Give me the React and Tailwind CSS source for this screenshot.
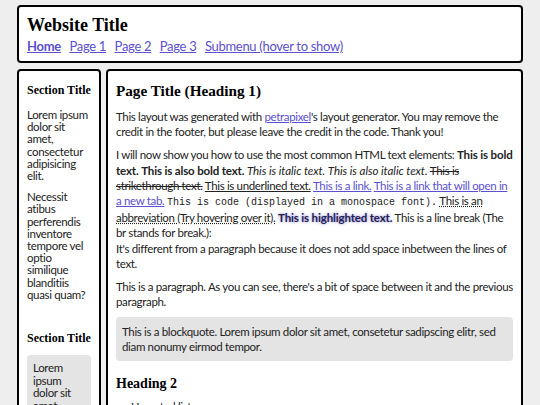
import React from "react";

const body = { fontFamily: "Lato, 'Noto Sans', sans-serif" };
const serif = { fontFamily: "'Liberation Serif', 'Times New Roman', serif" };

function A({ children, className = "" }) {
  return (
    <a href="#" className={"text-[#5b50d0] underline " + className}>
      {children}
    </a>
  );
}

export default function App() {
  return (
    <div className="min-h-screen bg-[#eeeeee] pt-[5px] pb-4 text-[#222]" style={body}>
      <div className="mx-auto w-[506px]">
        <header className="h-[58px] rounded-[4px] border-2 border-black bg-white px-[8px] pt-[7px]">
          <h1 className="text-[18px] font-bold leading-[22px] text-black" style={serif}>
            Website Title
          </h1>
          <nav className="mt-[3px] flex gap-[8.5px] text-[13px] leading-[15px] tracking-[-0.3px]">
            <A className="font-bold">Home</A>
            <A>Page 1</A>
            <A>Page 2</A>
            <A>Page 3</A>
            <A>Submenu (hover to show)</A>
          </nav>
        </header>

        <div className="mt-[6px] flex items-start gap-[5px] text-[11.5px] tracking-[-0.34px]">
          <aside className="w-[84px] shrink-0 rounded-[4px] border-2 border-black bg-white px-[8px] pt-[12px] pb-4">
            <h2 className="mb-[12px] text-[12px] font-bold leading-[14px] tracking-normal text-black" style={serif}>
              Section Title
            </h2>
            <p className="mb-[9px] leading-[12.2px]">
              Lorem ipsum dolor sit amet, consectetur adipisicing elit.
            </p>
            <p className="mb-[9px] leading-[12.2px]">
              Necessit atibus perferendis inventore tempore vel optio similique blanditiis quasi quam?
            </p>
            <h2 className="mt-[30px] text-[12px] font-bold leading-[14px] tracking-normal text-black" style={serif}>
              Section Title
            </h2>
            <div className="mt-[10px] rounded-[4px] bg-[#e4e4e4] px-[6px] py-[7px] leading-[12.5px]">
              Lorem ipsum dolor sit amet, consectetur adipisicing elit.
            </div>
          </aside>

          <main className="flex-1 rounded-[4px] border-2 border-black bg-white px-[8px] pt-[11px] pb-4 leading-[15.2px]">
            <h1 className="mb-[9px] text-[15.2px] font-bold leading-[18px] tracking-normal text-black" style={serif}>
              Page Title (Heading 1)
            </h1>
            <p className="mb-[8px]">
              This layout was generated with <A>petrapixel</A>'s layout generator. You may remove the credit in the
              footer, but please leave the credit in the code. Thank you!
            </p>
            <p className="mb-[8px]">
              I will now show you how to use the most common HTML text elements:{" "}
              <strong className="tracking-[-0.15px]">This is bold text.</strong>{" "}
              <b className="tracking-[-0.15px]">This is also bold text.</b>{" "}
              <i className="tracking-[-0.05px]">This is italic text.</i>{" "}
              <em className="tracking-[-0.05px]">This is also italic text.</em> <s>This is strikethrough text.</s>{" "}
              <u>This is underlined text.</u> <A>This is a link.</A> <A>This is a link that will open in a new tab.</A>{" "}
              <code className="text-[10px] tracking-normal" style={{ fontFamily: "'Liberation Mono', monospace" }}>
                This is code (displayed in a monospace font).
              </code>{" "}
              <abbr className="underline decoration-dotted" title="Abbreviation">
                This is an abbreviation (Try hovering over it).
              </abbr>{" "}
              <mark className="bg-transparent font-bold tracking-[-0.15px] text-[#22224f] [text-shadow:0_0_3px_rgba(90,70,200,0.7)]">
                This is highlighted text.
              </mark>{" "}
              This is a line break (The br stands for break.):
              <br />
              It's different from a paragraph because it does not add space inbetween the lines of text.
            </p>
            <p className="mb-[8px]">
              This is a paragraph. As you can see, there's a bit of space between it and the previous paragraph.
            </p>
            <blockquote className="mt-[8px] rounded-[4px] bg-[#e4e4e4] px-[6px] py-[6.5px]">
              This is a blockquote. Lorem ipsum dolor sit amet, consetetur sadipscing elitr, sed diam nonumy eirmod
              tempor.
            </blockquote>
            <h2 className="mt-[14px] mb-[7px] text-[14px] font-bold leading-[17px] tracking-normal text-black" style={serif}>
              Heading 2
            </h2>
            <ul className="list-disc pl-[15px]">
              <li>Unsorted list</li>
              <li>Lorem ipsum</li>
              <li>Dolor sit amet</li>
            </ul>
          </main>
        </div>
      </div>
    </div>
  );
}
